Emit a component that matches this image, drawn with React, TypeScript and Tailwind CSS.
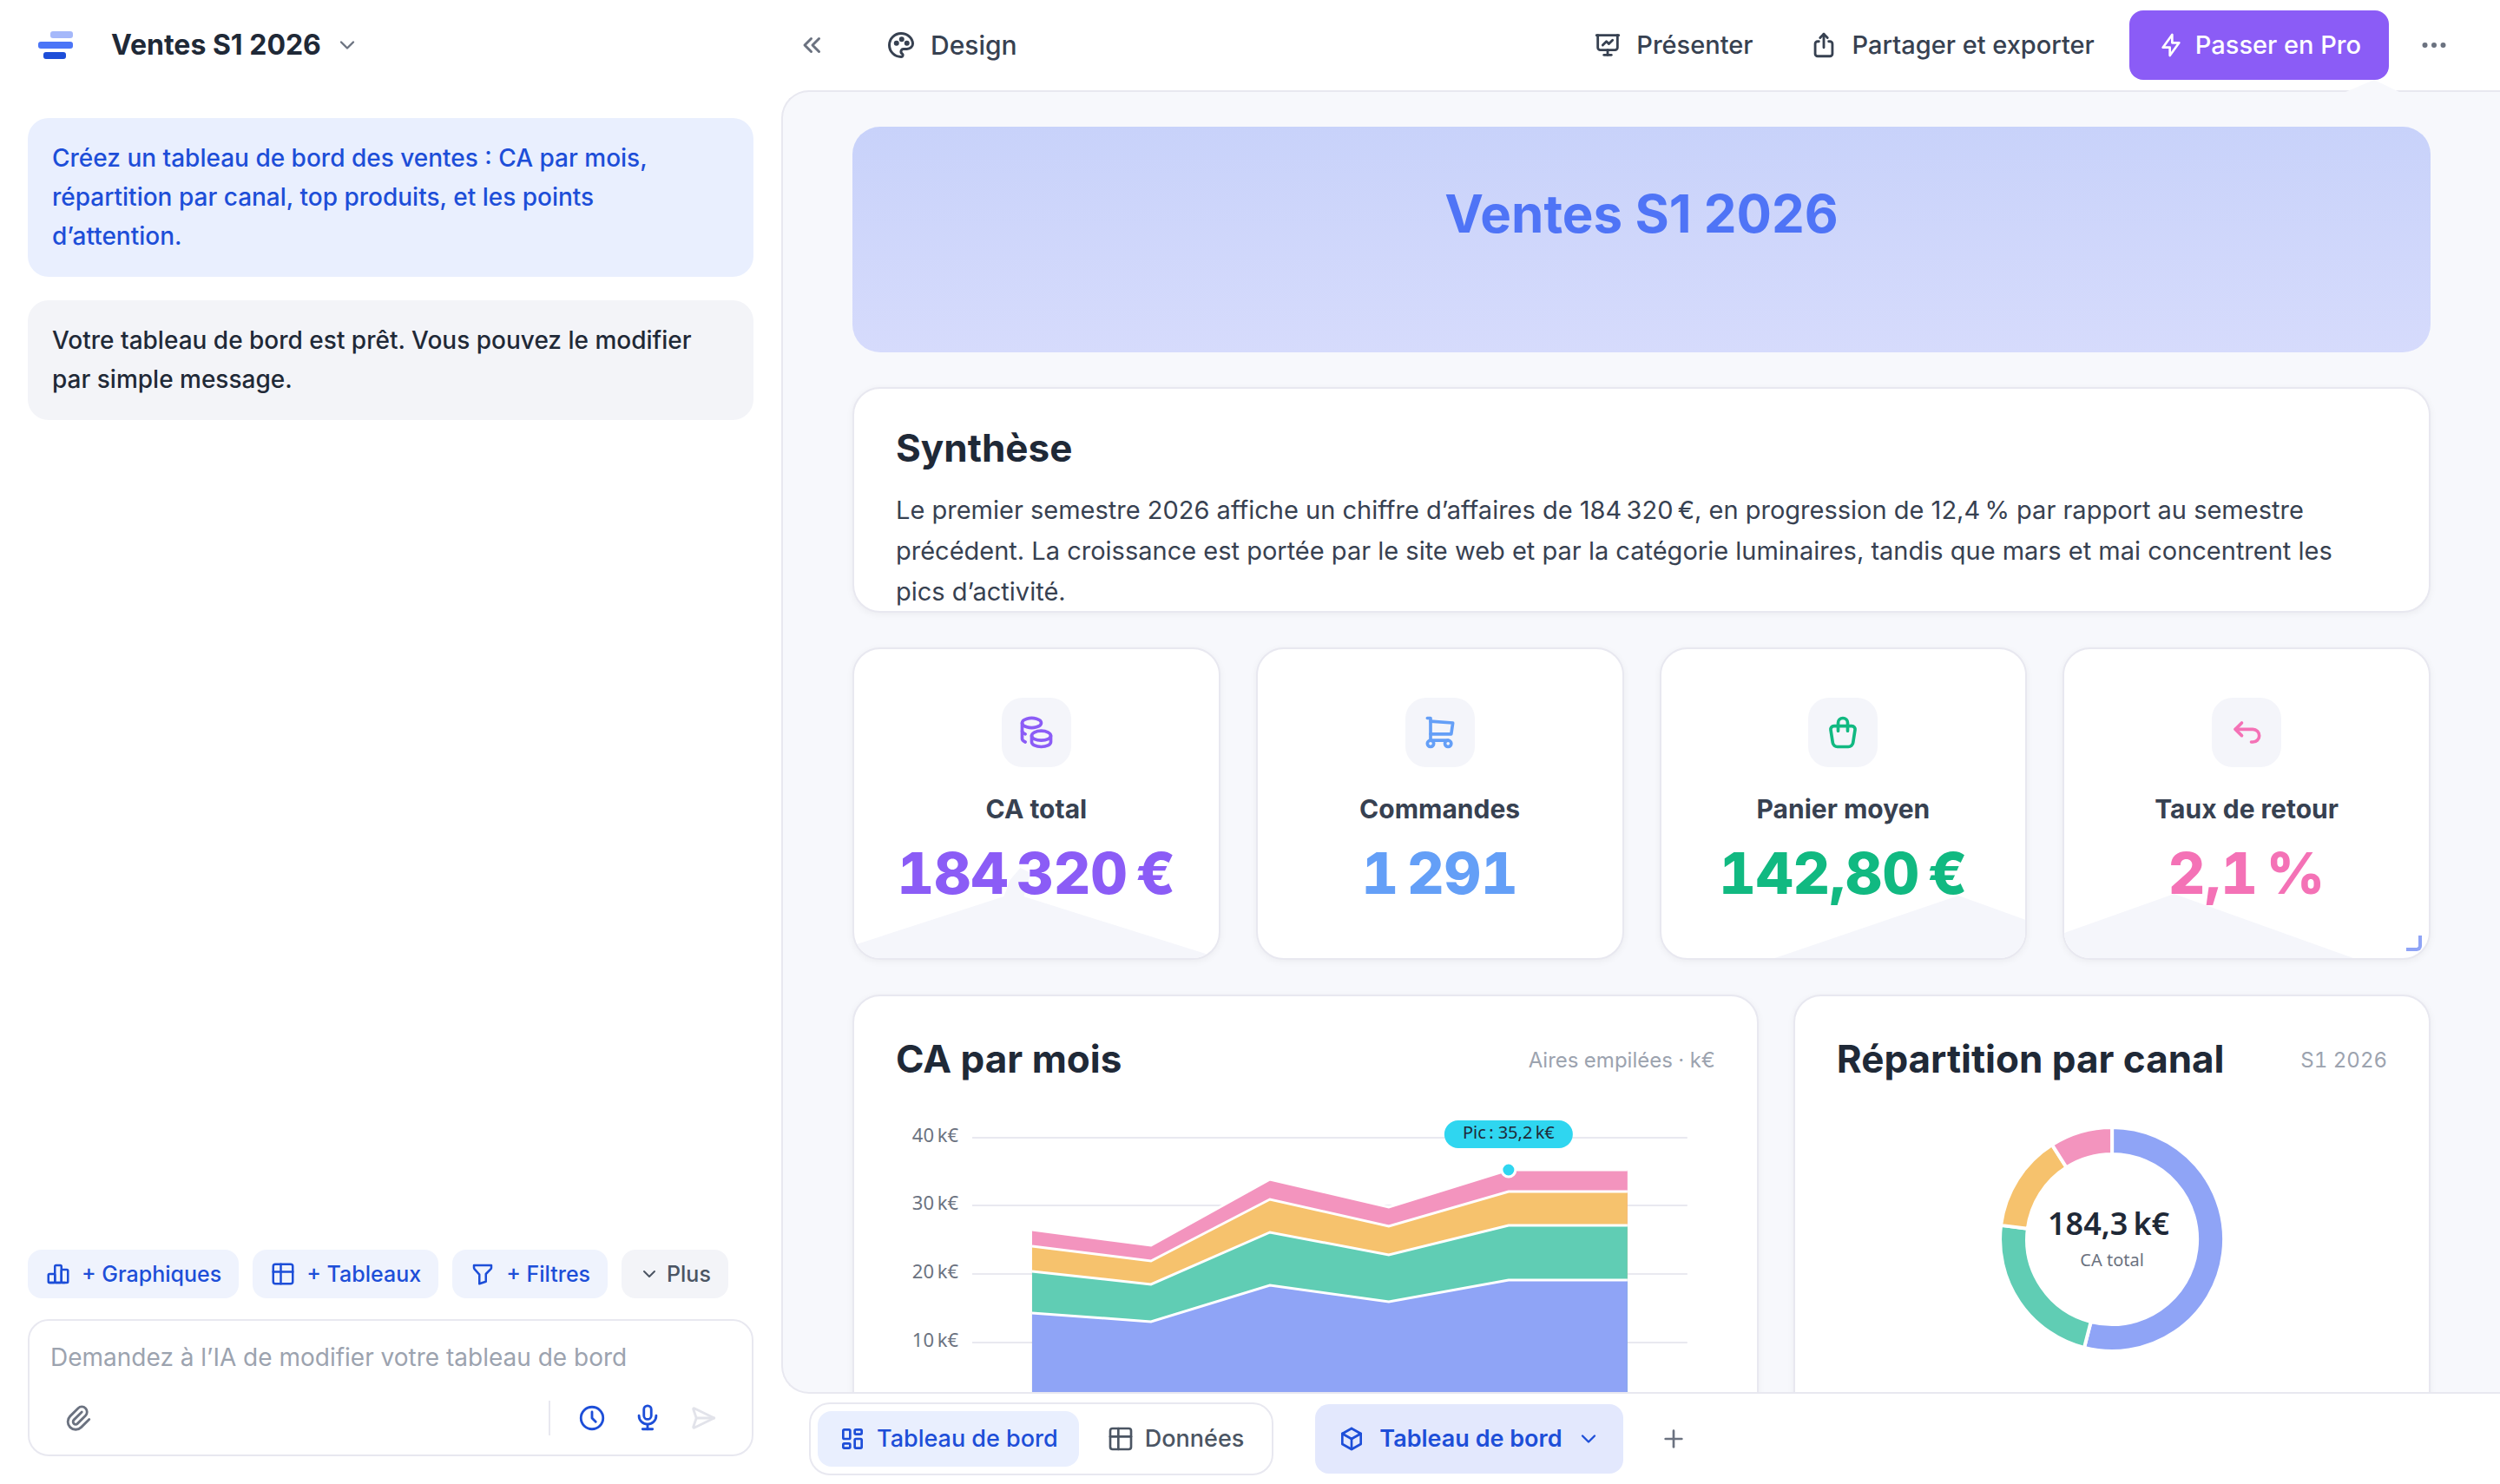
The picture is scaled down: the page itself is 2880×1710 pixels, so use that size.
import React, { useId } from "react";
import type { ReactNode } from "react";
import {
  TbArrowBackUp,
  TbBolt,
  TbBox,
  TbChartBar,
  TbChevronDown,
  TbChevronsLeft,
  TbClock,
  TbCoins,
  TbDots,
  TbFilter,
  TbLayoutDashboard,
  TbMicrophone,
  TbPalette,
  TbPaperclip,
  TbPlus,
  TbPresentation,
  TbSend2,
  TbShare2,
  TbShoppingBag,
  TbShoppingCart,
  TbTable,
} from "react-icons/tb";

const chartFont = '"Noto Sans", "Open Sans", sans-serif';

function Logo() {
  return (
    <svg viewBox="0 0 40 32" className="h-8 w-10" aria-hidden="true">
      <rect x="14" y="0" width="26" height="8" rx="3" fill="#a5b8fa" />
      <rect x="0" y="12" width="40" height="8" rx="3" fill="#4b75f7" />
      <rect x="6" y="24" width="26" height="8" rx="3" fill="#1d4ed8" />
    </svg>
  );
}

function Sidebar() {
  return (
    <aside className="flex w-[900px] shrink-0 flex-col px-8 pb-8">
      <div className="flex h-[104px] shrink-0 items-center pl-3">
        <Logo />
        <button type="button" className="ml-11 flex items-center gap-4 text-[32px] leading-10 font-bold text-[#1f2937]">
          Ventes S1 2026
          <TbChevronDown className="size-7 text-[#6b7280]" />
        </button>
      </div>
      <div className="mt-8 flex flex-col gap-[27px] text-[28px] leading-[45px] font-medium">
        <p className="rounded-3xl bg-[#e9effe] px-7 py-6 text-[#1d4ed8]">
          Créez un tableau de bord des ventes : CA par mois, répartition par canal, top produits, et les points
          d’attention.
        </p>
        <p className="rounded-3xl bg-[#f3f4f8] px-7 py-6 text-[#1f2937]">
          Votre tableau de bord est prêt. Vous pouvez le modifier par simple message.
        </p>
      </div>
      <div className="mt-auto flex gap-4 text-[25px] leading-8 font-medium text-[#1d4ed8]">
        <Chip icon={<TbChartBar className="size-[30px]" />} label="+ Graphiques" />
        <Chip icon={<TbTable className="size-[30px]" />} label="+ Tableaux" />
        <Chip icon={<TbFilter className="size-[30px]" />} label="+ Filtres" />
        <button type="button" className="flex h-14 items-center gap-2 rounded-2xl bg-[#f3f4f8] px-5 text-[#4b5563]">
          <TbChevronDown className="size-6" />
          Plus
        </button>
      </div>
      <form
        className="mt-6 rounded-3xl border-2 border-[#e8e8f0] px-6 pt-5 pb-2.5"
        onSubmit={(e) => e.preventDefault()}
      >
        <input
          type="text"
          aria-label="Message à l’IA"
          placeholder="Demandez à l’IA de modifier votre tableau de bord"
          className="block h-11 w-full text-[28px] outline-none placeholder:text-[#9ca3af]"
        />
        <div className="mt-4 flex items-center">
          <IconButton label="Joindre un fichier" className="text-[#6b7280]">
            <TbPaperclip className="size-[34px]" />
          </IconButton>
          <span className="mr-4 ml-auto h-10 w-0.5 bg-[#e8e8f0]" />
          <IconButton label="Historique" className="text-[#1d4ed8]">
            <TbClock className="size-[34px]" />
          </IconButton>
          <IconButton label="Dicter" className="text-[#1d4ed8]">
            <TbMicrophone className="size-[34px]" />
          </IconButton>
          <IconButton label="Envoyer" className="text-[#e2e3ea]">
            <TbSend2 className="size-[34px]" />
          </IconButton>
        </div>
      </form>
    </aside>
  );
}

function Chip({ icon, label }: { icon: ReactNode; label: string }) {
  return (
    <button type="button" className="flex h-14 items-center gap-3 rounded-2xl bg-[#eff3fd] px-5">
      {icon}
      {label}
    </button>
  );
}

function IconButton({ label, className, children }: { label: string; className: string; children: ReactNode }) {
  return (
    <button type="button" aria-label={label} className={`flex size-16 items-center justify-center ${className}`}>
      {children}
    </button>
  );
}

function Toolbar() {
  return (
    <header className="flex h-[104px] shrink-0 items-center pr-14 text-[29px] leading-10 font-medium text-[#374151]">
      <button type="button" aria-label="Réduire le panneau" className="ml-4 flex size-10 items-center justify-center text-[#6b7280]">
        <TbChevronsLeft className="size-9" />
      </button>
      <button type="button" className="ml-16 flex items-center gap-4 text-[30px]">
        <TbPalette className="size-9" />
        Design
      </button>
      <button type="button" className="ml-auto flex items-center gap-4">
        <TbPresentation className="size-[34px]" />
        Présenter
      </button>
      <button type="button" className="ml-16 flex items-center gap-4">
        <TbShare2 className="size-[34px]" />
        Partager et exporter
      </button>
      <button type="button" className="relative ml-10 flex h-20 items-center gap-3 rounded-2xl bg-[#8b5cf6] px-8 text-white">
        <TbBolt className="size-8" />
        Passer en Pro
        <svg viewBox="0 0 62 14" className="absolute top-full -right-3 h-3.5 w-[62px]" aria-hidden="true">
          <polygon points="0,14 33,0 62,14" fill="#f7f8fc" />
        </svg>
      </button>
      <button type="button" aria-label="Plus d’options" className="ml-8 flex size-10 items-center justify-center text-[#6b7280]">
        <TbDots className="size-9" />
      </button>
    </header>
  );
}

type Kpi = { label: string; value: string; icon: ReactNode; color: string; peak?: string; handle?: boolean };

const kpis: Kpi[] = [
  {
    label: "CA total",
    value: "184\u202f320\u202f€",
    icon: <TbCoins className="size-11" />,
    color: "text-[#8b5cf6]",
    peak: "0,89 173,33 180,14 192,0 204,6 196,33 406,99 406,104 0,104",
  },
  { label: "Commandes", value: "1\u202f291", icon: <TbShoppingCart className="size-11" />, color: "text-[#649ff7]" },
  {
    label: "Panier moyen",
    value: "142,80\u202f€",
    icon: <TbShoppingBag className="size-11" />,
    color: "text-[#11b981]",
    peak: "131,104 343,32 421,60 421,104",
  },
  {
    label: "Taux de retour",
    value: "2,1\u202f%",
    icon: <TbArrowBackUp className="size-11" />,
    color: "text-[#f472b6]",
    peak: "0,75 127,30 334,104 0,104",
    handle: true,
  },
];

function KpiCard({ label, value, icon, color, peak, handle }: Kpi) {
  return (
    <article className="relative flex h-[360px] flex-col items-center overflow-hidden rounded-[32px] border-2 border-[#e8e8f0] bg-white pt-14 shadow-[0_2px_8px_rgba(0,0,0,0.05)]">
      {peak && (
        <svg viewBox="0 0 421 104" preserveAspectRatio="none" className="absolute bottom-0 left-0 h-[104px] w-full" aria-hidden="true">
          <polygon points={peak} fill="#f5f6fb" />
        </svg>
      )}
      <div className={`flex size-20 items-center justify-center rounded-3xl bg-[#f4f5fa] ${color}`}>{icon}</div>
      <h3 className="mt-7 text-[30px] leading-10 font-bold text-[#374151]">{label}</h3>
      <p className={`relative mt-3.5 text-[66px] leading-[80px] font-extrabold tabular-nums ${color}`}>{value}</p>
      {handle && <span className="absolute right-2 bottom-2 size-[18px] rounded-br-md border-r-4 border-b-4 border-[#8fa4f6]" />}
    </article>
  );
}

const xs = [157, 294, 431, 568, 706, 843];
const bands = [
  { color: "#f394be", tops: [147, 165, 89, 121, 78, 78] },
  { color: "#f6c26d", tops: [166, 183, 112, 143, 103, 103] },
  { color: "#60cdb4", tops: [195, 210, 150, 176, 142, 142] },
  { color: "#8fa4f6", tops: [243, 253, 211, 230, 205, 205] },
];
const ticks = [
  { label: "40\u202fk€", y: 41 },
  { label: "30\u202fk€", y: 119 },
  { label: "20\u202fk€", y: 198 },
  { label: "10\u202fk€", y: 277 },
];

function AreaChart() {
  return (
    <svg viewBox="0 0 944 400" className="w-full" role="img" aria-label="CA par mois, aires empilées" fontFamily={chartFont}>
      {ticks.map((t) => (
        <g key={t.label}>
          <line x1="88" x2="912" y1={t.y} y2={t.y} stroke="#e9e9f0" strokeWidth="2" />
          <text x="72" y={t.y + 5} textAnchor="end" fontSize="22" fill="#6b7280">
            {t.label}
          </text>
        </g>
      ))}
      {bands.map((b) => (
        <g key={b.color}>
          <polygon points={`157,356 ${xs.map((x, i) => `${x},${b.tops[i]}`).join(" ")} 843,356`} fill={b.color} />
          <polyline points={xs.map((x, i) => `${x},${b.tops[i]}`).join(" ")} fill="none" stroke="#fff" strokeWidth="3" />
        </g>
      ))}
      <rect x="632" y="21" width="148" height="32" rx="16" fill="#2fd6f0" />
      <text x="706" y="42" textAnchor="middle" fontSize="20" fill="#1f2937">
        {"Pic\u202f: 35,2\u202fk€"}
      </text>
      <circle cx="706" cy="78" r="8" fill="#2fd6f0" stroke="#fff" strokeWidth="3" />
    </svg>
  );
}

const shares = [
  { value: 54, color: "#8fa4f6" },
  { value: 23, color: "#60cdb4" },
  { value: 14, color: "#f6c26d" },
  { value: 9, color: "#f394be" },
];

function point(r: number, pct: number) {
  const a = (pct / 100) * 2 * Math.PI;
  return `${(r * Math.sin(a)).toFixed(2)} ${(-r * Math.cos(a)).toFixed(2)}`;
}

function Donut() {
  let start = 0;
  const paths = shares.map((s) => {
    const a = start;
    const b = start + s.value;
    start = b;
    const large = s.value > 50 ? 1 : 0;
    return (
      <path
        key={s.color}
        d={`M${point(129, a)}A129 129 0 ${large} 1 ${point(129, b)}L${point(98, b)}A98 98 0 ${large} 0 ${point(98, a)}Z`}
        fill={s.color}
        stroke="#fff"
        strokeWidth="4"
      />
    );
  });
  return (
    <svg viewBox="-317 -158 634 400" className="w-full" role="img" aria-label="Répartition par canal" fontFamily={chartFont}>
      {paths}
      <text x="-4" y="-5" textAnchor="middle" fontSize="36" fontWeight="600" fill="#1f2937">
        {"184,3\u202fk€"}
      </text>
      <text x="0" y="31" textAnchor="middle" fontSize="20" fill="#6b7280">
        CA total
      </text>
    </svg>
  );
}

function ChartCard({ title, note, className, children }: { title: string; note: string; className: string; children: ReactNode }) {
  const id = useId();
  return (
    <section
      aria-labelledby={id}
      className={`rounded-[32px] border-2 border-[#e8e8f0] bg-white px-12 pt-11 shadow-[0_2px_8px_rgba(0,0,0,0.05)] ${className}`}
    >
      <div className="flex items-center justify-between">
        <h2 id={id} className="text-[44px] leading-[56px] font-bold text-[#1f2937]">
          {title}
        </h2>
        <span className="pt-1 text-2xl text-[#9ca3af] tabular-nums">{note}</span>
      </div>
      <div className="mt-[22px]">{children}</div>
    </section>
  );
}

const summary =
  "Le premier semestre 2026 affiche un chiffre d’affaires de 184\u202f320\u202f€, en progression de 12,4\u202f% par rapport au semestre précédent. La croissance est portée par le site web et par la catégorie luminaires, tandis que mars et mai concentrent les pics d’activité.";

function Canvas() {
  return (
    <main className="min-h-0 flex-1 overflow-hidden rounded-l-[32px] border-y-2 border-l-2 border-[#e8e8f0] bg-[#f7f8fc] px-20 pt-10">
      <div className="flex flex-col gap-10">
        <div className="h-[260px] rounded-[32px] bg-linear-to-b from-[#c8d2fa] to-[#d6dbfc] pt-16 text-center">
          <h1 className="text-[60px] leading-[72px] font-bold text-[#4f74f6]">Ventes S1 2026</h1>
        </div>
        <section className="h-[260px] overflow-hidden rounded-[32px] border-2 border-[#e8e8f0] bg-white px-12 pt-10 shadow-[0_2px_8px_rgba(0,0,0,0.05)]">
          <h2 className="text-[44px] leading-[56px] font-bold text-[#1f2937]">Synthèse</h2>
          <p className="mt-5 text-[29px] leading-[47px] text-[#374151]">{summary}</p>
        </section>
        <div className="grid grid-cols-4 gap-[41px]">
          {kpis.map((k) => (
            <KpiCard key={k.label} {...k} />
          ))}
        </div>
        <div className="grid grid-cols-12 gap-10">
          <ChartCard title="CA par mois" note="Aires empilées · k€" className="col-span-7">
            <AreaChart />
          </ChartCard>
          <ChartCard title="Répartition par canal" note="S1 2026" className="col-span-5">
            <Donut />
          </ChartCard>
        </div>
      </div>
    </main>
  );
}

function PageTabs() {
  return (
    <nav className="flex h-[104px] shrink-0 items-center pl-8 text-[27px] leading-10 font-medium">
      <div className="flex gap-2 rounded-3xl border-2 border-[#e8e8f0] p-2">
        <button type="button" className="flex h-16 items-center gap-3 rounded-2xl bg-[#e9effe] px-6 text-[#1d4ed8]">
          <TbLayoutDashboard className="size-8" />
          Tableau de bord
        </button>
        <button type="button" className="flex h-16 items-center gap-3 rounded-2xl px-6 text-[#4b5563]">
          <TbTable className="size-8" />
          Données
        </button>
      </div>
      <button type="button" className="ml-12 flex h-20 items-center rounded-2xl bg-[#e3e8fd] px-[26px] font-semibold text-[#1d4ed8]">
        <TbBox className="mr-4 size-8" />
        Tableau de bord
        <TbChevronDown className="ml-4 size-7" />
      </button>
      <button type="button" aria-label="Ajouter une page" className="ml-[42px] text-[#6b7280]">
        <TbPlus className="size-8" />
      </button>
    </nav>
  );
}

export default function App() {
  return (
    <div className="flex h-screen overflow-hidden bg-white font-['Inter',sans-serif]">
      <Sidebar />
      <div className="flex min-w-0 flex-1 flex-col">
        <Toolbar />
        <Canvas />
        <PageTabs />
      </div>
    </div>
  );
}
